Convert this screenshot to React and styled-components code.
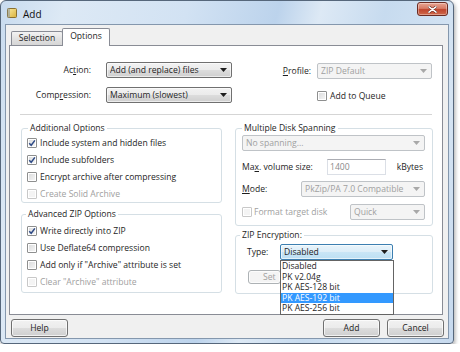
import React from "react";
import styled, { createGlobalStyle } from "styled-components";

const GlobalStyle = createGlobalStyle`
  html, body {
    margin: 0;
    padding: 0;
    background: #ffffff;
  }
  body {
    font-family: "Open Sans", "Noto Sans", "DejaVu Sans", sans-serif;
    font-size: 8.6px;
    color: #1e1e1e;
  }
  * {
    box-sizing: border-box;
  }
`;

const Window = styled.div`
  width: 454px;
  height: 344px;
  border: 1px solid #56677b;
  border-radius: 6px 6px 4px 4px;
  background: linear-gradient(
    104deg,
    #c8dbef 0%,
    #dde9f5 12%,
    #d2e2f3 35%,
    #bcd3ec 52%,
    #dde9f5 60%,
    #c7dbef 72%,
    #d5e4f3 88%,
    #c6d9ee 100%
  );
  box-shadow: 1px 2px 4px rgba(0, 0, 0, 0.35);
  display: flex;
  flex-direction: column;
  padding: 0 4px 4px 4px;
`;

const TitleBar = styled.div`
  height: 23px;
  display: flex;
  align-items: flex-start;
  flex-shrink: 0;
`;

const AppIcon = styled.svg`
  width: 10px;
  height: 10px;
  margin: 7px 0 0 2px;
`;

const Title = styled.span`
  margin: 7px 0 0 6px;
  line-height: 12px;
  font-size: 10px;
  color: #101010;
`;

const CloseButton = styled.div`
  margin: 1px 1px 0 auto;
  width: 31px;
  height: 14px;
  border: 1px solid #6b2b22;
  border-radius: 3px;
  background: linear-gradient(#e8a593 0%, #d77b66 45%, #c0452d 55%, #d06a4c 100%);
  display: flex;
  align-items: center;
  justify-content: center;
  box-shadow: inset 0 0 0 1px rgba(255, 255, 255, 0.35);
`;

const Client = styled.div`
  height: 315px;
  background: #f0f0f0;
  border: 1px solid #8497ad;
  padding: 3px 5px 1px 3px;
  display: flex;
  flex-direction: column;
`;

const TabRow = styled.div`
  height: 17px;
  display: flex;
  align-items: flex-end;
  padding-left: 2px;
  flex-shrink: 0;
`;

const Tab = styled.div`
  position: relative;
  width: ${p => p.$w}px;
  height: ${p => (p.$active ? 18 : 14)}px;
  margin-bottom: ${p => (p.$active ? -1 : 0)}px;
  margin-right: ${p => (p.$active ? 0 : -1)}px;
  z-index: ${p => (p.$active ? 1 : 0)};
  border: 1px solid #898c95;
  border-bottom: none;
  border-radius: 2px 2px 0 0;
  background: ${p => (p.$active ? "#ffffff" : "linear-gradient(#f3f3f3, #e2e2e2 50%, #d6d6d6)")};
  text-align: center;
  line-height: ${p => (p.$active ? 15 : 12)}px;
`;

const Panel = styled.div`
  height: 270px;
  border: 1px solid #898c95;
  background: #ffffff;
  display: flex;
  flex-direction: column;
  flex-shrink: 0;
`;

const TopSection = styled.div`
  display: flex;
  justify-content: space-between;
  padding: 16px 10px 0 10px;
`;

const LeftFields = styled.div`
  display: grid;
  grid-template-columns: 71px 126px;
  grid-auto-rows: 16px;
  column-gap: 15px;
  row-gap: 9px;
  align-items: center;
`;

const RightFields = styled.div`
  display: grid;
  grid-template-columns: auto 115px;
  grid-auto-rows: 16px;
  column-gap: 6px;
  row-gap: 9px;
  align-items: center;
  margin-top: 1px;
`;

const Label = styled.span`
  white-space: nowrap;
  text-align: ${p => (p.$right ? "right" : "left")};
  width: ${p => (p.$w ? `${p.$w}px` : "auto")};
  flex-shrink: 0;
  color: ${p => (p.$disabled ? "#a0a0a0" : "#1e1e1e")};
`;

const Combo = styled.div`
  position: relative;
  display: flex;
  align-items: center;
  width: ${p => (p.$w ? `${p.$w}px` : "auto")};
  flex: ${p => (p.$grow ? 1 : "none")};
  height: ${p => p.$h || 16}px;
  padding-left: 3px;
  border: 1px solid ${p => (p.$disabled ? "#bfc3c7" : p.$focused ? "#3c7fb1" : "#707070")};
  border-radius: 2px;
  margin-left: ${p => (p.$push ? "auto" : "0")};
  color: ${p => (p.$disabled ? "#a0a0a0" : "#1e1e1e")};
  background: ${p =>
    p.$disabled
      ? "#f4f4f4"
      : p.$focused
      ? "linear-gradient(#e8f4fb, #dcedf8 50%, #c9e5f6 50%, #bcdff3)"
      : "linear-gradient(#f2f2f2, #ebebeb 50%, #dddddd 50%, #cfcfcf)"};
  box-shadow: ${p => (p.$disabled ? "none" : "inset 0 0 0 1px rgba(255,255,255,0.6)")};
`;

const ComboText = styled.span`
  flex: 1;
  white-space: nowrap;
  overflow: hidden;
  line-height: 12px;
`;

const Arrow = styled.svg`
  width: 7px;
  height: 4px;
  margin: 0 4px 0 3px;
  flex-shrink: 0;
`;

const Separator = styled.div`
  height: 1px;
  background: #d5d5d5;
  margin: 10px 10px 0 10px;
`;

const Columns = styled.div`
  display: grid;
  grid-template-columns: 201px 198px;
  column-gap: 13px;
  padding: 7px 0 0 11px;
  align-items: start;
`;

const Column = styled.div`
  display: flex;
  flex-direction: column;
`;

const Group = styled.fieldset`
  margin: ${p => p.$mt || 0}px 0 0 0;
  padding: ${p => p.$pad};
  border: 1px solid #d5dfe5;
  border-radius: 3px;
  min-width: 0;
`;

const Legend = styled.legend`
  padding: 0 2px;
  margin-left: ${p => p.$indent}px;
  line-height: 12px;
`;

const CheckRow = styled.label`
  display: flex;
  align-items: center;
  gap: ${p => p.$gap ?? 3}px;
  height: ${p => p.$h || 17}px;
  white-space: nowrap;
  color: ${p => (p.$disabled ? "#a0a0a0" : "#1e1e1e")};
`;

const Box = styled.span`
  width: 10px;
  height: 10px;
  flex-shrink: 0;
  border: 1px solid ${p => (p.$disabled ? "#c8c8c8" : "#8e8f8f")};
  border-radius: 1px;
  background: ${p => (p.$disabled ? "#f4f4f4" : "linear-gradient(135deg, #d9dadb, #f7f7f7)")};
  box-shadow: inset 0 0 0 1px #ffffff;
  display: flex;
  align-items: center;
  justify-content: center;
`;

const FieldRow = styled.div`
  display: flex;
  align-items: center;
  margin-top: ${p => p.$mt || 0}px;
`;

const TextInput = styled.div`
  width: 59px;
  height: 16px;
  border: 1px solid #dbdfe6;
  border-top-color: #abadb3;
  background: #ffffff;
  color: #8a8a8a;
  padding-left: 2px;
  line-height: 14px;
`;

const Unit = styled.span`
  flex: 1;
  text-align: right;
  padding-right: 2px;
`;

const Button = styled.div`
  width: ${p => p.$w || 57}px;
  height: ${p => p.$h || 18}px;
  margin-left: ${p => (p.$push ? "auto" : `${p.$ml || 0}px`)};
  margin-top: ${p => p.$mt || 0}px;
  border: 1px solid ${p => (p.$disabled ? "#adb2b5" : "#707070")};
  border-radius: 3px;
  background: ${p =>
    p.$disabled ? "#f4f4f4" : "linear-gradient(#f2f2f2, #ebebeb 50%, #dddddd 50%, #cfcfcf)"};
  box-shadow: inset 0 0 0 1px rgba(255, 255, 255, 0.7);
  color: ${p => (p.$disabled ? "#a0a0a0" : "#1e1e1e")};
  text-align: center;
  line-height: ${p => (p.$h || 18) - 2}px;
  white-space: nowrap;
`;

/* the list covers this button from x 280 on, so it is cut off there */
const HiddenButton = styled(Button)`
  overflow: hidden;
  text-align: left;
  padding-left: 14px;
`;

const ButtonRow = styled.div`
  display: flex;
  gap: 7px;
  margin: 4px -1px 0 2px;
`;

const DropList = styled.div`
  position: absolute;
  top: calc(100% + 1px);
  left: -1px;
  width: 114px;
  border: 1px solid #646464;
  background: #ffffff;
  z-index: 2;
`;

const DropItem = styled.div`
  height: 10.5px;
  line-height: 10.5px;
  padding-left: 1px;
  background: ${p => (p.$selected ? "#3399ff" : "transparent")};
  color: ${p => (p.$selected ? "#ffffff" : "#1e1e1e")};
  white-space: nowrap;
`;

const ArrowIcon = ({ disabled }) => (
  <Arrow viewBox="0 0 7 4">
    <polygon points="0,0 7,0 3.5,4" fill={disabled ? "#a8a8a8" : "#1e1e1e"} />
  </Arrow>
);

const Select = ({ children, disabled, focused, list, ...rest }) => (
  <Combo $disabled={disabled} $focused={focused} {...rest}>
    <ComboText>{children}</ComboText>
    <ArrowIcon disabled={disabled} />
    {list}
  </Combo>
);

const Check = ({ checked, disabled, children, gap }) => (
  <CheckRow $disabled={disabled} $gap={gap}>
    <Box $disabled={disabled}>
      {checked && (
        <svg width="8" height="8" viewBox="0 0 8 8">
          <path d="M1.2 4.2 L3.2 6.3 L6.9 1.4" fill="none" stroke="#2e4a86" strokeWidth="1.5" />
        </svg>
      )}
    </Box>
    {children}
  </CheckRow>
);

const encryption = ["Disabled", "PK v2.04g", "PK AES-128 bit", "PK AES-192 bit", "PK AES-256 bit"];

export default function App() {
  return (
    <>
      <GlobalStyle />
      <Window>
        <TitleBar>
          <AppIcon viewBox="0 0 10 10">
            <defs>
              <linearGradient id="ic" x1="0" y1="0" x2="1" y2="1">
                <stop offset="0" stopColor="#fbeaa0" />
                <stop offset="1" stopColor="#d9b23c" />
              </linearGradient>
            </defs>
            <rect x="0.5" y="0.5" width="9" height="9" rx="1" fill="url(#ic)" stroke="#8a7030" />
            <rect x="0.5" y="0.5" width="2.5" height="9" fill="#8c9aa8" opacity="0.6" />
          </AppIcon>
          <Title>Add</Title>
          <CloseButton>
            <svg width="9" height="7" viewBox="0 0 9 7">
              <path d="M1 0.8 L8 6.2 M8 0.8 L1 6.2" stroke="#5a2018" strokeWidth="2.6" strokeLinecap="round" />
              <path d="M1 0.8 L8 6.2 M8 0.8 L1 6.2" stroke="#ffffff" strokeWidth="1.5" strokeLinecap="round" />
            </svg>
          </CloseButton>
        </TitleBar>

        <Client>
          <TabRow>
            <Tab $w={52}>Selection</Tab>
            <Tab $w={48} $active>Options</Tab>
          </TabRow>

          <Panel>
            <TopSection>
              <LeftFields>
                <Label $right>
                  Ac<u>t</u>ion:
                </Label>
                <Select>Add (and replace) files</Select>
                <Label $right>
                  Comp<u>r</u>ession:
                </Label>
                <Select>Maximum (slowest)</Select>
              </LeftFields>
              <RightFields>
                <Label $right>
                  <u>P</u>rofile:
                </Label>
                <Select disabled>ZIP Default</Select>
                <span />
                <Check>Add to Queue</Check>
              </RightFields>
            </TopSection>

            <Separator />

            <Columns>
              <Column>
                <Group $pad="0 6px 0 5px">
                  <Legend $indent={1}>Additional Options</Legend>
                  <Check checked>Include system and hidden files</Check>
                  <Check checked>Include subfolders</Check>
                  <Check>Encrypt archive after compressing</Check>
                  <Check disabled>Create Solid Archive</Check>
                </Group>
                <Group $mt={5} $pad="2px 6px 2px 5px">
                  <Legend $indent={-1}>Advanced ZIP Options</Legend>
                  <Check checked>Write directly into ZIP</Check>
                  <Check>Use Deflate64 compression</Check>
                  <Check>Add only if "Archive" attribute is set</Check>
                  <Check disabled>Clear "Archive" attribute</Check>
                </Group>
              </Column>

              <Column>
                <Group $pad="1px 7px 5px 6px">
                  <Legend $indent={0}>Multiple Disk Spanning</Legend>
                  <Select disabled>No spanning...</Select>
                  <FieldRow $mt={8}>
                    <Label $w={85}>
                      Ma<u>x</u>. volume size:
                    </Label>
                    <TextInput>1400</TextInput>
                    <Unit>kBytes</Unit>
                  </FieldRow>
                  <FieldRow $mt={6}>
                    <Label $w={59}>
                      <u>M</u>ode:
                    </Label>
                    <Select disabled $grow>
                      PkZip/PA 7.0 Compatible
                    </Select>
                  </FieldRow>
                  <FieldRow $mt={6}>
                    <Check disabled gap={2}>
                      Format target disk
                    </Check>
                    <Select disabled $w={75} $push>
                      Quick
                    </Select>
                  </FieldRow>
                </Group>
                <Group $mt={3} $pad="3px 7px 9px 11px">
                  <Legend $indent={-7}>ZIP Encryption:</Legend>
                  <FieldRow>
                    <Label $w={33}>Type:</Label>
                    <Select
                      focused
                      $w={113}
                      list={
                        <DropList>
                          {encryption.map(item => (
                            <DropItem key={item} $selected={item === "PK AES-192 bit"}>
                              {item}
                            </DropItem>
                          ))}
                        </DropList>
                      }
                    >
                      Disabled
                    </Select>
                  </FieldRow>
                  <HiddenButton $disabled $w={33} $h={14} $mt={10} $ml={1}>
                    Set
                  </HiddenButton>
                </Group>
              </Column>
            </Columns>
          </Panel>

          <ButtonRow>
            <Button>Help</Button>
            <Button $push>Add</Button>
            <Button>Cancel</Button>
          </ButtonRow>
        </Client>
      </Window>
    </>
  );
}
